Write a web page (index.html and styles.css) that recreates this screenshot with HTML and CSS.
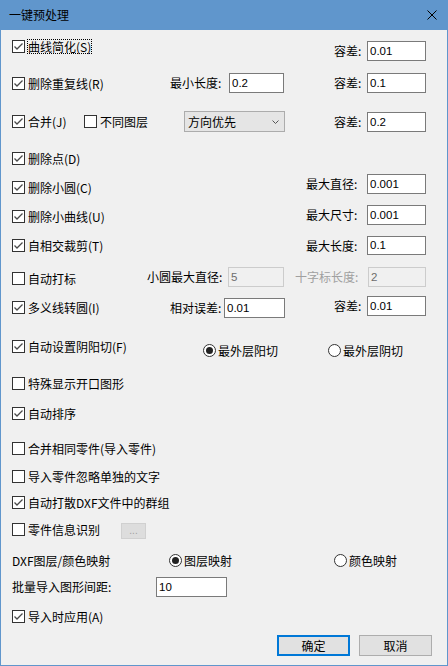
FILE: index.html
```html
<!DOCTYPE html>
<html lang="zh">
<head>
<meta charset="utf-8">
<title>一键预处理</title>
<link rel="stylesheet" href="styles.css">
</head>
<body>
<div class="window">
  <div class="titlebar">
    <span class="title">一键预处理</span>
    <svg class="close" viewBox="0 0 10 10"><path d="M0.5 0.5 L9.5 9.5 M9.5 0.5 L0.5 9.5" stroke="#000" stroke-width="1" fill="none"/></svg>
  </div>
  <div class="client">
    <div class="row h33">
      <div class="c1">
        <label class="check"><span class="box"><svg viewBox="0 0 11 11"><path d="M1.5 5.5 L4 8 L9.5 2.5" /></svg></span><span class="txt focus">曲线简化(S)</span></label>
      </div>
      <div class="right mt1"><span class="lbl w33">容差:</span><span class="field w59">0.01</span></div>
    </div>

    <div class="row h38">
      <div class="c1 mt4">
        <label class="check"><span class="box"><svg viewBox="0 0 11 11"><path d="M1.5 5.5 L4 8 L9.5 2.5" /></svg></span><span class="txt">删除重复线(R)</span></label>
      </div>
      <div class="mid ml24"><span class="lbl w59">最小长度:</span><span class="field w55">0.2</span></div>
      <div class="right"><span class="lbl w33">容差:</span><span class="field w59">0.1</span></div>
    </div>

    <div class="row h41">
      <div class="c1 mt4">
        <label class="check w72"><span class="box"><svg viewBox="0 0 11 11"><path d="M1.5 5.5 L4 8 L9.5 2.5" /></svg></span><span class="txt">合并(J)</span></label>
        <label class="check"><span class="box off"></span><span class="txt">不同图层</span></label>
      </div>
      <div class="select ml38"><span>方向优先</span><svg class="chev" viewBox="0 0 7 4"><path d="M0.5 0.5 L3.5 3.5 L6.5 0.5"/></svg></div>
      <div class="right mt1"><span class="lbl w33">容差:</span><span class="field w59">0.2</span></div>
    </div>

    <div class="row h22">
      <label class="check"><span class="box"><svg viewBox="0 0 11 11"><path d="M1.5 5.5 L4 8 L9.5 2.5" /></svg></span><span class="txt">删除点(D)</span></label>
    </div>

    <div class="row h31">
      <div class="c1 mt7">
        <label class="check"><span class="box"><svg viewBox="0 0 11 11"><path d="M1.5 5.5 L4 8 L9.5 2.5" /></svg></span><span class="txt">删除小圆(C)</span></label>
      </div>
      <div class="right"><span class="lbl w61">最大直径:</span><span class="field w59">0.001</span></div>
    </div>

    <div class="row h31">
      <div class="c1 mt5">
        <label class="check"><span class="box"><svg viewBox="0 0 11 11"><path d="M1.5 5.5 L4 8 L9.5 2.5" /></svg></span><span class="txt">删除小曲线(U)</span></label>
      </div>
      <div class="right"><span class="lbl w61">最大尺寸:</span><span class="field w59">0.001</span></div>
    </div>

    <div class="row h31">
      <div class="c1 mt3">
        <label class="check"><span class="box"><svg viewBox="0 0 11 11"><path d="M1.5 5.5 L4 8 L9.5 2.5" /></svg></span><span class="txt">自相交裁剪(T)</span></label>
      </div>
      <div class="right"><span class="lbl w61">最大长度:</span><span class="field w59 h19">0.1</span></div>
    </div>

    <div class="row h29">
      <div class="c1 mt5">
        <label class="check"><span class="box off"></span><span class="txt">自动打标</span></label>
      </div>
      <div class="mid ml1"><span class="lbl w81">小圆最大直径:</span><span class="field w56 disabled">5</span></div>
      <div class="right"><span class="lbl w73 dim">十字标长度:</span><span class="field w58 disabled">2</span></div>
    </div>

    <div class="row h44">
      <div class="c1 mt5">
        <label class="check"><span class="box"><svg viewBox="0 0 11 11"><path d="M1.5 5.5 L4 8 L9.5 2.5" /></svg></span><span class="txt">多义线转圆(I)</span></label>
      </div>
      <div class="mid ml24 mt2"><span class="lbl w54">相对误差:</span><span class="field w61">0.01</span></div>
      <div class="right"><span class="lbl w33">容差:</span><span class="field w59">0.01</span></div>
    </div>

    <div class="row h37">
      <div class="c1 c1-radio">
        <label class="check"><span class="box"><svg viewBox="0 0 11 11"><path d="M1.5 5.5 L4 8 L9.5 2.5" /></svg></span><span class="txt">自动设置阴阳切(F)</span></label>
      </div>
      <label class="radio w125 mt4"><span class="dot on"></span><span class="txt">最外层阳切</span></label>
      <label class="radio mt4"><span class="dot"></span><span class="txt">最外层阴切</span></label>
    </div>

    <div class="row h30">
      <label class="check"><span class="box off"></span><span class="txt">特殊显示开口图形</span></label>
    </div>

    <div class="row h35">
      <label class="check"><span class="box"><svg viewBox="0 0 11 11"><path d="M1.5 5.5 L4 8 L9.5 2.5" /></svg></span><span class="txt">自动排序</span></label>
    </div>

    <div class="row h28">
      <label class="check"><span class="box off"></span><span class="txt">合并相同零件(导入零件)</span></label>
    </div>

    <div class="row h26">
      <label class="check"><span class="box off"></span><span class="txt">导入零件忽略单独的文字</span></label>
    </div>

    <div class="row h27">
      <label class="check"><span class="box"><svg viewBox="0 0 11 11"><path d="M1.5 5.5 L4 8 L9.5 2.5" /></svg></span><span class="txt">自动打散DXF文件中的群组</span></label>
    </div>

    <div class="row h31">
      <div class="c1 c1-btn">
        <label class="check"><span class="box off"></span><span class="txt">零件信息识别</span></label>
      </div>
      <span class="dots">...</span>
    </div>

    <div class="row h23">
      <div class="c1 c1-map"><span class="plain">DXF图层/颜色映射</span></div>
      <label class="radio w165"><span class="dot on"></span><span class="txt">图层映射</span></label>
      <label class="radio"><span class="dot"></span><span class="txt">颜色映射</span></label>
    </div>

    <div class="row h33">
      <div class="c1 c1-gap"><span class="lbl">批量导入图形间距:</span></div>
      <span class="field w71">10</span>
    </div>

    <div class="row h25">
      <label class="check"><span class="box"><svg viewBox="0 0 11 11"><path d="M1.5 5.5 L4 8 L9.5 2.5" /></svg></span><span class="txt">导入时应用(A)</span></label>
    </div>

    <div class="buttons">
      <span class="btn default">确定</span>
      <span class="btn">取消</span>
    </div>
  </div>
</div>
</body>
</html>
```

FILE: styles.css
```css
* { box-sizing: border-box; }

body {
  margin: 0;
  font-family: "Noto Sans CJK SC", "Noto Sans", sans-serif;
  font-size: 12px;
  color: #000;
}

.window {
  width: 448px;
  height: 666px;
  background: #6096cc;
  display: flex;
  flex-direction: column;
}

.titlebar {
  height: 30px;
  flex: none;
  display: flex;
  align-items: center;
  justify-content: space-between;
  padding: 0 11px 0 9px;
}

.title { font-size: 12px; line-height: 16px; }

.close { width: 10px; height: 10px; display: block; }

.client {
  flex: 1;
  margin: 0 1px 1px;
  background: #f0f0f0;
  padding: 10px 0 0 11px;
}

.row {
  display: flex;
  align-items: flex-start;
  padding-right: 21px;
}

.h22 { height: 22px; }
.h23 { height: 23px; }
.h25 { height: 25px; }
.h26 { height: 26px; }
.h27 { height: 27px; }
.h28 { height: 28px; }
.h29 { height: 29px; }
.h30 { height: 30px; }
.h31 { height: 31px; }
.h33 { height: 33px; }
.h35 { height: 35px; }
.h37 { height: 37px; }
.h38 { height: 38px; }
.h41 { height: 41px; }
.h44 { height: 44px; }

.mt1 { margin-top: 1px; }
.mt2 { margin-top: 2px; }
.mt3 { margin-top: 3px; }
.mt4 { margin-top: 4px; }
.mt5 { margin-top: 5px; }
.mt7 { margin-top: 7px; }

.ml1 { margin-left: 1px; }
.ml24 { margin-left: 24px; }
.ml38 { margin-left: 38px; }

.c1 {
  width: 134px;
  flex: none;
  display: flex;
  align-items: center;
}
.c1-radio { width: 191px; }
.c1-btn { width: 109px; }
.c1-map { width: 157px; }
.c1-gap { width: 144px; }

.check, .radio {
  display: flex;
  align-items: center;
  height: 13px;
  white-space: nowrap;
  flex: none;
}

.w72 { width: 72px; }
.w125 { width: 125px; }
.w165 { width: 165px; }

.box {
  width: 13px;
  height: 13px;
  border: 1px solid #333;
  background: #fff;
  margin-right: 3px;
  flex: none;
}
.box svg { width: 11px; height: 11px; display: block; }
.box svg path { fill: none; stroke: #4a4a4a; stroke-width: 1.3; }

.txt { line-height: 13px; }

.focus { outline: 1px dotted #000; outline-offset: 0; }

.dot {
  width: 13px;
  height: 13px;
  border: 1px solid #333;
  border-radius: 50%;
  background: #fff;
  margin-right: 2px;
  flex: none;
  display: flex;
  align-items: center;
  justify-content: center;
}
.dot.on::after {
  content: "";
  width: 7px;
  height: 7px;
  border-radius: 50%;
  background: #222;
}

.mid, .right {
  display: flex;
  align-items: flex-start;
  flex: none;
}
.right { margin-left: auto; }

.lbl {
  line-height: 20px;
  white-space: nowrap;
  flex: none;
}
.w33 { width: 33px; }
.w54 { width: 54px; }
.w59 { width: 59px; }
.w61 { width: 61px; }
.w73 { width: 73px; }
.w81 { width: 81px; }
.dim { color: #a0a0a0; }

.field {
  height: 20px;
  border: 1px solid #7a7a7a;
  background: #fff;
  padding-left: 2px;
  font-family: "Liberation Sans", Arial, sans-serif;
  font-size: 11.5px;
  line-height: 18px;
  flex: none;
}
.field.h19 { height: 19px; line-height: 17px; }
.field.w55 { width: 55px; }
.field.w56 { width: 56px; }
.field.w58 { width: 58px; }
.field.w59 { width: 59px; }
.field.w61 { width: 61px; }
.field.w71 { width: 71px; }
.field.disabled {
  background: #f0f0f0;
  border-color: #cccccc;
  color: #6d6d6d;
}

.select {
  width: 101px;
  height: 21px;
  border: 1px solid #acacac;
  background: #e5e5e5;
  display: flex;
  align-items: center;
  justify-content: space-between;
  padding: 0 5px 0 3px;
  line-height: 19px;
  flex: none;
}
.chev { width: 7px; height: 4px; display: block; }
.chev path { fill: none; stroke: #555; stroke-width: 1; }

.plain { line-height: 13px; white-space: nowrap; }

.dots {
  width: 25px;
  height: 16px;
  background: #dddddd;
  border: 1px solid #d0d0d0;
  color: #a0a0a0;
  font-family: "Liberation Sans", Arial, sans-serif;
  font-size: 10px;
  line-height: 13px;
  text-align: center;
  flex: none;
}

.buttons {
  display: flex;
  justify-content: flex-end;
  gap: 9px;
  padding-right: 15px;
}

.btn {
  width: 73px;
  height: 21px;
  border: 1px solid #adadad;
  background: #e1e1e1;
  display: flex;
  align-items: center;
  justify-content: center;
  line-height: 14px;
}
.btn.default { border: 2px solid #0078d7; }
```
